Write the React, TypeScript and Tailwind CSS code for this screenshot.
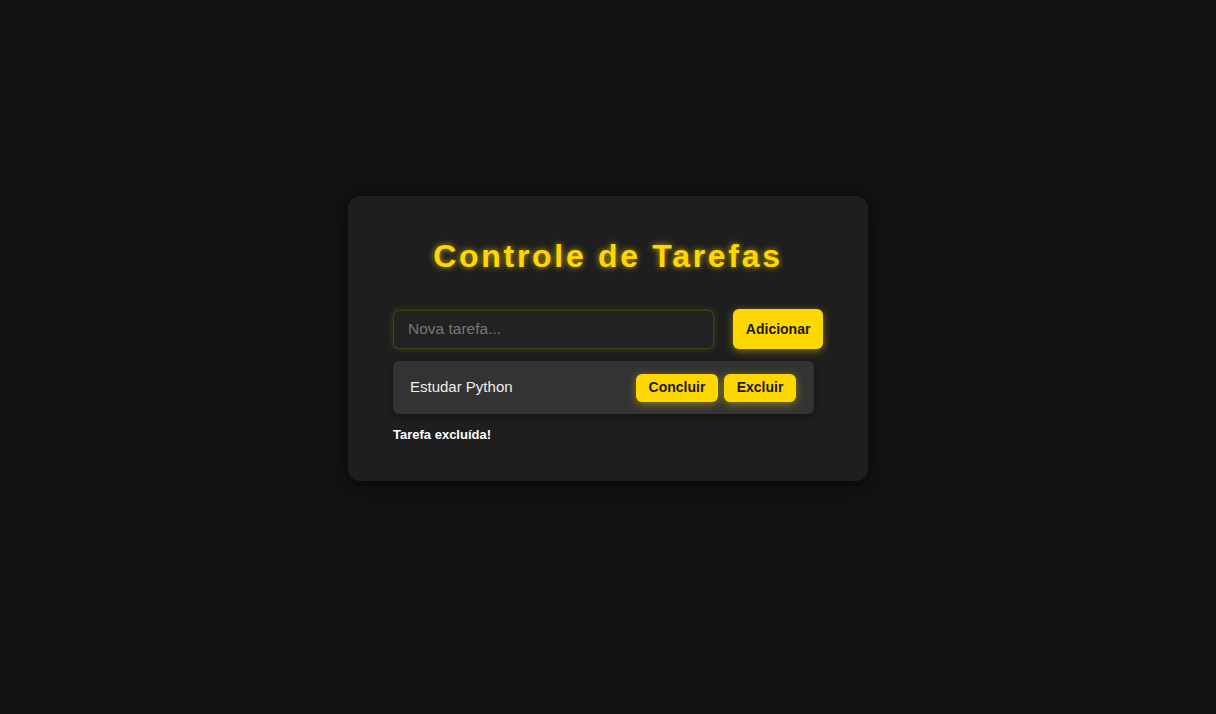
import { useState } from "react";

type Task = { id: number; text: string; done: boolean };

export default function App() {
  const [tasks, setTasks] = useState<Task[]>([{ id: 1, text: "Estudar Python", done: false }]);
  const [value, setValue] = useState("");
  const [message, setMessage] = useState("Tarefa excluída!");

  const addTask = () => {
    if (!value.trim()) return;
    setTasks([...tasks, { id: Date.now(), text: value.trim(), done: false }]);
    setValue("");
    setMessage("Tarefa adicionada!");
  };

  const btn =
    "bg-[#ffd700] text-[#1a1a1a] font-bold text-[14px] rounded-[6px] shadow-[0_2px_8px_rgba(255,215,0,0.45)] cursor-pointer";

  return (
    <div className="min-h-screen bg-[#121212] flex justify-center pt-[196px] font-['Liberation_Sans',Arial,sans-serif]">
      <div className="w-[520px] h-[285px] bg-[#1e1e1e] rounded-[12px] shadow-[0_4px_20px_rgba(0,0,0,0.6)] px-[45px] pt-[42px]">
        <h1 className="text-center text-[32px] leading-[37px] font-bold tracking-[2.7px] text-[#ffd700] [text-shadow:0_0_6px_rgba(255,215,0,0.75)]">
          Controle de Tarefas
        </h1>

        <div className="flex items-center gap-[19px] mt-[34px]">
          <input
            value={value}
            onChange={(e) => setValue(e.target.value)}
            placeholder="Nova tarefa..."
            className="w-[322px] h-[39px] px-[14px] bg-[#222222] border border-[rgba(255,215,0,0.16)] rounded-[6px] text-[15.5px] text-[#eeeeee] placeholder:text-[#777777] outline-none shadow-[0_0_6px_rgba(255,215,0,0.18)]"
          />
          <button onClick={addTask} className={`${btn} w-[90px] h-[40px]`}>
            Adicionar
          </button>
        </div>

        <ul className="mt-[12px] w-[421px] flex flex-col gap-2">
          {tasks.map((t) => (
            <li
              key={t.id}
              className="h-[53px] bg-[#333333] rounded-[6px] flex items-center justify-between pl-[17px] pr-[18px] shadow-[0_2px_6px_rgba(0,0,0,0.4)]"
            >
              <span className={`text-[15px] text-[#eeeeee] ${t.done ? "line-through" : ""}`}>{t.text}</span>
              <div className="flex gap-[6px]">
                <button
                  onClick={() => {
                    setTasks(tasks.map((x) => (x.id === t.id ? { ...x, done: !x.done } : x)));
                    setMessage("Tarefa concluída!");
                  }}
                  className={`${btn} w-[82px] h-[28px]`}
                >
                  Concluir
                </button>
                <button
                  onClick={() => {
                    setTasks(tasks.filter((x) => x.id !== t.id));
                    setMessage("Tarefa excluída!");
                  }}
                  className={`${btn} w-[72px] h-[28px]`}
                >
                  Excluir
                </button>
              </div>
            </li>
          ))}
        </ul>

        <p className="mt-[13px] text-[13px] leading-[15px] font-bold text-white">{message}</p>
      </div>
    </div>
  );
}
